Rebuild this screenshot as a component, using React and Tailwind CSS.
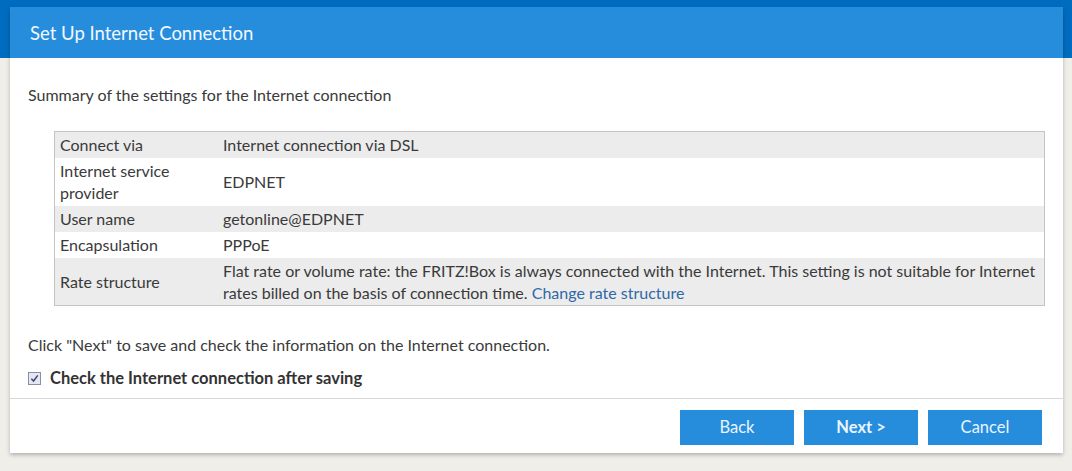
export default function App() {
  const rows = [
    { label: "Connect via", value: "Internet connection via DSL", shaded: true },
    { label: "Internet service provider", value: "EDPNET", shaded: false, tall: true },
    { label: "User name", value: "getonline@EDPNET", shaded: true },
    { label: "Encapsulation", value: "PPPoE", shaded: false },
  ];

  return (
    <div
      className="min-h-[471px] w-[1072px] bg-[#f0eee9] relative text-[#3a3a3a]"
      style={{ fontFamily: "Lato, 'Open Sans', sans-serif" }}
    >
      <div className="h-[58px] bg-[#006cbf]" />
      <div className="absolute left-[10px] top-[7px] w-[1053px] bg-white shadow-[0_2px_4px_rgba(0,0,0,0.25)]">
        <div className="h-[51px] bg-[#268ddd] px-[20px] pt-[3px] flex items-center text-[18.5px] text-[#f2f8ff]">
          Set Up Internet Connection
        </div>

        <div className="px-[18px] pt-[26px] text-[16px]">
          <p className="leading-[22px]">Summary of the settings for the Internet connection</p>

          <div className="mt-[25px] ml-[26px] border border-[#c4c4c4]">
            {rows.map((r) => (
              <div
                key={r.label}
                className={`flex items-center ${r.shaded ? "bg-[#ececec]" : "bg-white"} ${r.tall ? "h-[48px]" : "h-[26px]"}`}
              >
                <div className="w-[168px] shrink-0 pl-[5px] leading-[22px]">
                  {r.tall ? (
                    <>
                      Internet service
                      <br />
                      provider
                    </>
                  ) : (
                    r.label
                  )}
                </div>
                <div className="flex-1">{r.value}</div>
              </div>
            ))}
            <div className="flex items-center h-[47px] bg-[#ececec]">
              <div className="w-[168px] shrink-0 pl-[5px]">Rate structure</div>
              <div className="flex-1 min-w-0 leading-[22px] whitespace-nowrap">
                Flat rate or volume rate: the FRITZ!Box is always connected with the Internet. This setting is not suitable for Internet
                <br />
                rates billed on the basis of connection time.{" "}
                <span className="text-[#2f68a8]">Change rate structure</span>
              </div>
            </div>
          </div>

          <p className="mt-[28px] leading-[22px]">
            Click "Next" to save and check the information on the Internet connection.
          </p>
          <label className="mt-[10px] flex items-center gap-[9px] font-bold text-[16.5px] text-[#333]">
            <span className="w-[13px] h-[13px] border border-[#8a8fa8] bg-[#e4e7f2] flex items-center justify-center">
              <svg viewBox="0 0 10 10" className="w-[9px] h-[9px]">
                <path d="M1.5 5.2 L4 7.8 L8.6 1.6" fill="none" stroke="#3b4470" strokeWidth="1.6" />
              </svg>
            </span>
            Check the Internet connection after saving
          </label>
        </div>

        <div className="mt-[7px] border-t border-[#d8d8d8] flex justify-end gap-[10px] pt-[11px] pb-[8px] pr-[21px]">
          <button className="w-[114px] h-[35px] bg-[#268ddd] text-[#eaf4ff] text-[16.5px]">Back</button>
          <button className="w-[114px] h-[35px] bg-[#268ddd] text-[#eaf4ff] text-[16.5px] font-bold">Next &gt;</button>
          <button className="w-[114px] h-[35px] bg-[#268ddd] text-[#eaf4ff] text-[16.5px]">Cancel</button>
        </div>
      </div>
    </div>
  );
}
